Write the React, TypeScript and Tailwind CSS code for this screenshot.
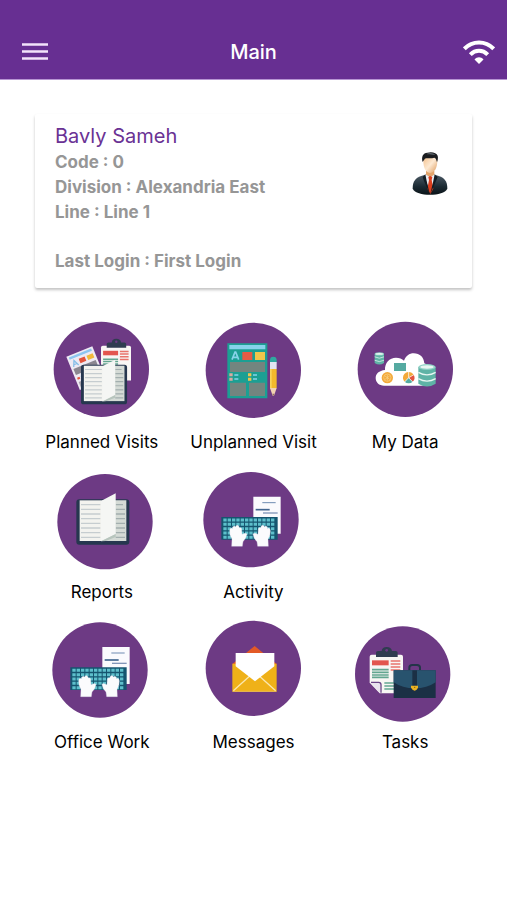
import type { ReactNode } from "react";

type UserInfo = {
  name: string;
  code: string;
  division: string;
  line: string;
  lastLogin: string;
};

type MenuItem = {
  label: string;
  icon: ReactNode;
  column: string;
};

const user: UserInfo = {
  name: "Bavly Sameh",
  code: "0",
  division: "Alexandria East",
  line: "Line 1",
  lastLogin: "First Login",
};

const PURPLE = "#6d3a84";

function MenuIcon() {
  return (
    <svg className="h-6 w-7" viewBox="0 0 28 24" aria-hidden="true">
      <path
        d="M1 4.500h26M1 11.500h26M1 18.500h26"
        stroke="#f3e3fb"
        strokeWidth="2.4"
      />
    </svg>
  );
}

function WifiIcon() {
  return (
    <svg className="h-6 w-8" viewBox="0 0 32 24" fill="none" aria-hidden="true">
      <path d="M1.300 8.800C9.500 0.400 22.500 0.400 30.700 8.800" stroke="#fff" strokeWidth="4" />
      <path d="M7.300 14.600C12.300 9.600 19.700 9.600 24.700 14.600" stroke="#fff" strokeWidth="4" />
      <path d="M11.500 19.500C14 16.600 18 16.600 20.500 19.500L16 24z" fill="#fff" />
    </svg>
  );
}

function Avatar() {
  return (
    <svg className="h-12 w-9" viewBox="0 0 108 144" aria-hidden="true">
      <defs>
        <linearGradient id="suit" x1="0" y1="0" x2="0" y2="1">
          <stop offset="0" stopColor="#4c5a66" />
          <stop offset="0.6" stopColor="#1b2a33" />
          <stop offset="1" stopColor="#0b1418" />
        </linearGradient>
        <linearGradient id="skin" x1="0" y1="0" x2="1" y2="1">
          <stop offset="0" stopColor="#f4c08c" />
          <stop offset="0.5" stopColor="#fde9d2" />
          <stop offset="1" stopColor="#dd9a5c" />
        </linearGradient>
      </defs>
      <path d="M2 122C2 98 10 87 40 80h28c30 7 38 18 38 42-6 12-28 18-52 18S8 134 2 122z" fill="url(#suit)" />
      <path d="M42 68h25v16l-12 22-13-22z" fill="#e3a46c" />
      <path d="M40 79l-3 6 17 48 18-48-4-6-13 9z" fill="#e9edf3" />
      <path d="M49 87l5-3 7 3-2 9 5 26-9 16-9-16 5-26z" fill="#dc3f1d" />
      <path d="M40 79l-8 8 4 12 17 38-9-38zM68 79l9 8-5 12-17 38 9-38z" fill="#131d24" />
      <path d="M34 36c0 24 6 36 20 39 15-3 22-15 22-39 0-14-42-14-42 0z" fill="url(#skin)" />
      <path d="M32 42c-5-16 1-27 14-28 13-4 28 0 31 9 2 7 0 14-2 20-2-9-4-13-8-14-9 3-18 1-25 2-5 2-6 6-10 11z" fill="#1a1c1f" />
      <path d="M43 18c10-5 22-3 27 3-8-2-18 0-27-3z" fill="#5e666d" />
    </svg>
  );
}

// every tile icon is drawn on a 336 unit square, viewX centres its column
function TileIcon({
  viewX,
  cx,
  cy,
  children,
}: {
  viewX: number;
  cx: number;
  cy: number;
  children: ReactNode;
}) {
  return (
    <svg
      className="size-28"
      viewBox={`${viewX} 0 336 336`}
      fill="none"
      aria-hidden="true"
    >
      <circle cx={cx} cy={cy} r="143" fill={PURPLE} />
      {children}
    </svg>
  );
}

function Book() {
  return (
    <g>
      <rect x="93" y="103" width="159" height="136" rx="9" fill="#26374f" />
      <path d="M103 106h66v122h-66z" fill="#f3f3ef" />
      <path d="M169 106h74v122h-74z" fill="#d5dbd6" />
      <path
        d="M107 119h58M107 133h58M107 147h58M107 161h58M107 175h58M107 189h58M107 203h58M107 217h58"
        stroke="#c6cdd0"
        strokeWidth="4"
      />
      <path
        d="M211 119h22M211 133h28M211 147h28M211 161h28M211 175h28M211 189h28M211 203h28M211 217h28"
        stroke="#a3afaf"
        strokeWidth="4"
      />
      <path d="M167 108l44-23v122l-44 22z" fill="#f5f6f4" />
      <path d="M167 229l44-22v9l-30 12z" fill="#b7c5bd" />
    </g>
  );
}

function Clipboard() {
  return (
    <g>
      <path d="M66 119h88q6 0 6 6v110H90L60 203v-78q0-6 6-6z" fill="#f8f6f4" />
      <path d="M67 136h50v15H67z" fill="#e2564f" />
      <path d="M123 138h29M123 147h29M123 156h29M123 165h29" stroke="#e8746c" strokeWidth="5" />
      <path d="M67 164h50M67 172h50M67 180h50M67 187h50" stroke="#62a690" strokeWidth="5" />
      <path d="M104 204h40M104 213h40M104 222h40" stroke="#62a690" strokeWidth="5" />
      <path d="M62 202h29v32z" fill="#e9e3ee" />
      <path d="M64 202h23q7 0 7 7v24" stroke="#6a4587" strokeWidth="4" />
      <path
        d="M79 126v-13q0-5 6-5h11q1-12 15-12t16 12h11q6 0 6 5v13z"
        fill="#303c50"
      />
      <circle cx="111" cy="106" r="4" fill={PURPLE} />
    </g>
  );
}

function PlannedIcon() {
  return (
    <TileIcon viewX={2} cx={168} cy={163}>
      <g transform="translate(63 125) rotate(-22)">
        <path d="M0 0h84v108H0z" fill="#eeeaf3" />
        <path d="M6 5h72v7H6z" fill="#8cc5ef" />
        <path d="M9 37l8-18 8 18M12 31h10" stroke="#88bfe8" strokeWidth="4" />
        <path d="M32 20h19v14H32z" fill="#e4543c" />
        <path d="M57 20h20v14H57z" fill="#f2b93b" />
        <path d="M6 42h72v20H6z" fill="#8b8790" />
        <path d="M6 71h8v6H6z" fill="#e4543c" />
        <path d="M18 71h16M18 77h12" stroke="#8cc5ef" strokeWidth="3" />
        <path d="M6 84h30v18H6z" fill="#a7a3ac" />
      </g>
      <g transform="translate(113 -15) scale(0.9)">
        <Clipboard />
      </g>
      <g transform="translate(26 60) scale(0.87)">
        <Book />
      </g>
    </TileIcon>
  );
}

function UnplannedIcon() {
  return (
    <TileIcon viewX={7} cx={176} cy={166}>
      <path d="M98 85h120v165H98z" fill="#1c9f93" />
      <path d="M104 90h108v13H104z" fill="#86d3ea" />
      <path
        d="M112 134l9-23h2l9 23M115 127h14"
        stroke="#86d3ea"
        strokeWidth="5"
      />
      <path d="M143 111h30v24h-30z" fill="#e75a45" />
      <path d="M181 111h30v24h-30z" fill="#f1c54b" />
      <path d="M106 141h105v30H106z" fill="#73857f" />
      <path d="M104 175h10v9h-10zM104 188h10v9h-10z" fill="#d9a9a0" />
      <path d="M160 175h10v9h-10zM160 188h10v9h-10z" fill="#f1c54b" />
      <path d="M119 180h12M119 192h12M175 180h12M175 192h12" stroke="#86d3ea" strokeWidth="4" />
      <path d="M106 203h48v40h-48zM163 203h48v40h-48z" fill="#73857f" />
      <path d="M226 143v-8q0-10 10-10t10 10v8z" fill="#2fa9a0" />
      <path d="M226 141h20v21h-20z" fill="#e3e5f1" />
      <path d="M226 162h20v58h-20z" fill="#f3b92c" />
      <path d="M226 162h5v58h-5z" fill="#f9d45c" />
      <path d="M226 219h20l-8 23h-4z" fill="#f2d2b2" />
      <path d="M233 236h6l-3 7z" fill="#8a6a5a" />
    </TileIcon>
  );
}

function Cylinder() {
  return (
    <g>
      <path d="M0 9v50q26 17 52 0V9z" fill="#5fb3a6" />
      <ellipse cx="26" cy="9" rx="26" ry="9" fill="#8fd1c5" />
      <ellipse cx="26" cy="9" rx="20" ry="5" fill="#e8f6f2" />
      <path d="M0 25q26 15 52 0M0 44q26 15 52 0" stroke="#e8f6f2" strokeWidth="4" />
    </g>
  );
}

function DataIcon() {
  return (
    <TileIcon viewX={-2} cx={167} cy={163}>
      <path
        d="M103 212c-15 0-25-10-25-23 0-13 10-22 28-24-1-21 13-37 33-37 10 0 18 3 24 9 5-14 16-22 29-22 19 0 31 13 32 30l6 3v64z"
        fill="#fff"
      />
      <path d="M133 144h36v24h-36z" fill="#55aaa1" />
      <circle cx="113" cy="188" r="17" fill="#f3a93a" />
      <circle cx="113" cy="188" r="11" stroke="#f9d48b" strokeWidth="2" />
      <path d="M113 179v18M106 183l14 10M120 183l-14 10" stroke="#f9d48b" strokeWidth="2" />
      <path d="M177 188V171a17 17 0 0 1 15 9z" fill="#f3a93a" />
      <path d="M177 188V171a17 17 0 0 0-12 29z" fill="#f3a93a" />
      <path d="M177 188l15-9a17 17 0 0 1-3 21z" fill="#e4533f" />
      <path d="M177 188l12 12a17 17 0 0 1-24 0z" fill="#55aaa1" />
      <path d="M177 188V170M177 188l16-9M177 188l12 13M177 188l-12 13" stroke="#fff" strokeWidth="2" />
      <g transform="translate(206 147)">
        <Cylinder />
      </g>
      <g transform="translate(75 112) scale(0.54)">
        <Cylinder />
      </g>
    </TileIcon>
  );
}

function ReportsIcon() {
  return (
    <TileIcon viewX={2} cx={179} cy={170}>
      <Book />
    </TileIcon>
  );
}

function Hand() {
  return (
    <path
      d="M111 244l1-21q-8-12-7-26 0-9 6-8l2 2q0-8 6-8l4 2q2-5 6-4 4 1 5 7 5-2 7 3l1 17 8-3q6-1 7 3-3 14-12 22l-2 14z"
      fill="#fbfbfd"
      stroke="#ded8ea"
      strokeWidth="1"
    />
  );
}

function TypingDrawing() {
  return (
    <g>
      <path d="M176 95h82v111h-82z" fill="#fafafd" />
      <path d="M203 113h40" stroke="#6e8bb2" strokeWidth="3" />
      <path d="M183 134h42" stroke="#42658f" strokeWidth="5" />
      <path d="M205 144h44" stroke="#8296b8" strokeWidth="4" />
      <path d="M80 156h169v68H80z" fill="#15556f" />
      <path
        d="M86 165h156M86 178h156M86 191h156M86 204h156M86 217h156"
        stroke="#5dbfcb"
        strokeWidth="9"
        strokeDasharray="10 3"
      />
      <Hand />
      <g transform="translate(332 0) scale(-1 1)">
        <Hand />
      </g>
    </g>
  );
}

function ActivityIcon() {
  return (
    <TileIcon viewX={7} cx={169} cy={164}>
      <TypingDrawing />
    </TileIcon>
  );
}

function OfficeIcon() {
  return (
    <TileIcon viewX={2} cx={164} cy={165}>
      <g transform="translate(-5 1)">
        <TypingDrawing />
      </g>
    </TileIcon>
  );
}

function MessagesIcon() {
  return (
    <TileIcon viewX={7} cx={176} cy={160}>
      <path d="M113 147l67-54 66 54z" fill="#e35a26" />
      <path d="M113 146h133v84H113z" fill="#efb118" />
      <path d="M116 227l50-45M243 227l-50-45" stroke="#fbe7ae" strokeWidth="4" />
      <path d="M123 114h116v40l-58 45-58-45z" fill="#fff" />
      <path d="M114 229h131" stroke="#f6cf62" strokeWidth="2" />
    </TileIcon>
  );
}

function TasksIcon() {
  return (
    <TileIcon viewX={-2} cx={159} cy={177}>
      <Clipboard />
      <path d="M179 166v-8q0-8 9-8h14q9 0 9 8v8" stroke="#243549" strokeWidth="6" />
      <path d="M132 166h126v83H132z" fill="#1b3045" />
      <path d="M132 166h126v36q-26 18-63 18t-63-18z" fill="#28536e" />
      <path d="M188 166h14v48h-14z" fill="#1b3045" />
      <path d="M184 212h21v5q-3 10-10 10t-11-10z" fill="#eab322" />
      <circle cx="195" cy="217" r="2" fill="#7c5a14" />
    </TileIcon>
  );
}

const menuItems: MenuItem[] = [
  { label: "Planned Visits", icon: <PlannedIcon />, column: "col-start-1" },
  { label: "Unplanned Visit", icon: <UnplannedIcon />, column: "col-start-2" },
  { label: "My Data", icon: <DataIcon />, column: "col-start-3" },
  { label: "Reports", icon: <ReportsIcon />, column: "col-start-1" },
  { label: "Activity", icon: <ActivityIcon />, column: "col-start-2" },
  { label: "Office Work", icon: <OfficeIcon />, column: "col-start-1" },
  { label: "Messages", icon: <MessagesIcon />, column: "col-start-2" },
  { label: "Tasks", icon: <TasksIcon />, column: "col-start-3" },
];

function TopBar() {
  return (
    <header className="grid grid-cols-[1fr_auto_1fr] items-center border-b border-[#b795d3] bg-[#672f92] px-3 pt-[25px] text-white">
      <button
        className="flex h-[54px] items-center justify-self-start pl-[9px]"
        type="button"
        aria-label="Menu"
      >
        <MenuIcon />
      </button>
      <h1 className="text-xl font-medium">Main</h1>
      <button
        className="flex h-[54px] items-center justify-self-end"
        type="button"
        aria-label="Connection"
      >
        <WifiIcon />
      </button>
    </header>
  );
}

function UserCard() {
  return (
    <section className="mx-[35px] mt-[34px] flex items-start justify-between rounded-xs bg-white pt-2 pr-6 pb-3.5 pl-5 shadow-[0_2px_3px_rgba(0,0,0,0.24)]">
      <div className="text-[17px] leading-[25px] font-bold text-[#969696]">
        <h2 className="text-xl leading-7 font-normal text-[#6a3294]">{user.name}</h2>
        <p>Code : {user.code}</p>
        <p>Division : {user.division}</p>
        <p>Line : {user.line}</p>
        <p className="mt-6">Last Login : {user.lastLogin}</p>
      </div>
      <div className="mt-[26px]">
        <Avatar />
      </div>
    </section>
  );
}

export default function App() {
  return (
    <div className="min-h-screen bg-white font-['Inter',sans-serif]">
      <TopBar />
      <main>
        <UserCard />
        <nav className="mt-[27px] grid grid-cols-3 gap-y-2 px-[26px]">
          {menuItems.map((item) => (
            <button
              className={`${item.column} flex flex-col items-center text-[17px] leading-[30px] whitespace-nowrap text-black`}
              key={item.label}
              type="button"
            >
              {item.icon}
              <span>{item.label}</span>
            </button>
          ))}
        </nav>
      </main>
    </div>
  );
}
